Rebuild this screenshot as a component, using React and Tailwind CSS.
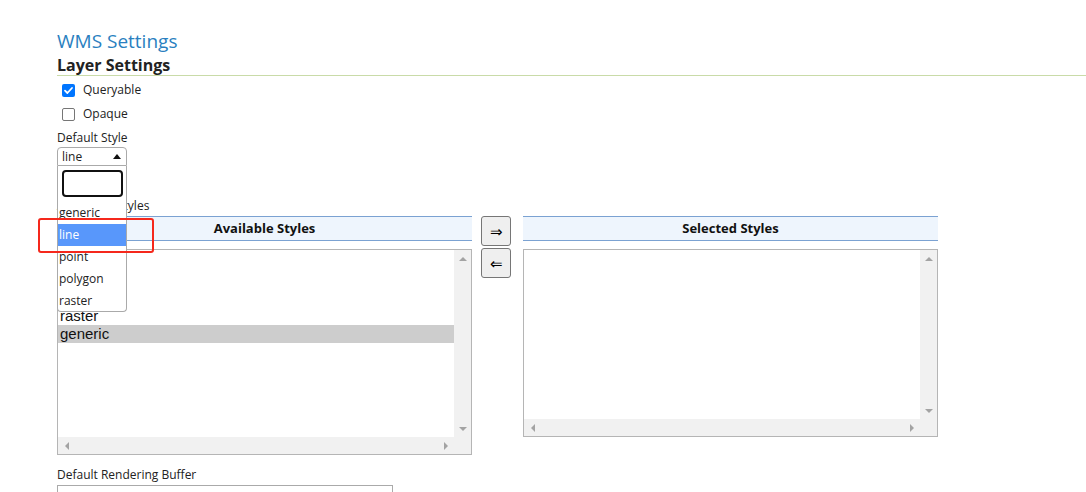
import React from "react";

function VScroll({ className = "" }) {
  return (
    <div className={"absolute right-0 top-0 w-[17px] bg-[#f1f1f1] flex flex-col items-center justify-between " + className}>
      <div className="h-[17px] flex items-center justify-center">
        <div className="w-0 h-0 border-x-[4px] border-x-transparent border-b-[4px] border-b-[#a3a3a3]" />
      </div>
      <div className="h-[17px] flex items-center justify-center">
        <div className="w-0 h-0 border-x-[4px] border-x-transparent border-t-[4px] border-t-[#a3a3a3]" />
      </div>
    </div>
  );
}

function HScroll() {
  return (
    <div className="absolute left-0 right-0 bottom-0 h-[17px] bg-[#f1f1f1] flex items-center justify-between">
      <div className="w-[17px] h-[17px] flex items-center justify-center">
        <div className="w-0 h-0 border-y-[4px] border-y-transparent border-r-[4px] border-r-[#a3a3a3]" />
      </div>
      <div className="w-[17px] h-[17px] mr-[17px] flex items-center justify-center">
        <div className="w-0 h-0 border-y-[4px] border-y-transparent border-l-[4px] border-l-[#a3a3a3]" />
      </div>
    </div>
  );
}

function Checkbox({ checked }) {
  if (checked) {
    return (
      <div className="w-[13px] h-[13px] rounded-[2px] bg-[#0075ff] flex items-center justify-center">
        <svg width="11" height="11" viewBox="0 0 11 11">
          <path d="M2 5.6 L4.4 8 L9 3" stroke="white" strokeWidth="1.8" fill="none" strokeLinecap="round" strokeLinejoin="round" />
        </svg>
      </div>
    );
  }
  return <div className="w-[13px] h-[13px] rounded-[2px] border border-[#767676] bg-white" />;
}

export default function App() {
  const items = ["line", "point", "polygon", "raster", "generic"];
  return (
    <div
      className="relative w-[1086px] h-[492px] overflow-hidden bg-white text-[#333]"
      style={{ fontFamily: '"Open Sans", "Noto Sans", sans-serif' }}
    >
      <div className="pl-[57px] pt-[28px]">
        <h1 className="text-[19px] leading-[26px] text-[#2a7fc0]">WMS Settings</h1>
        <h2 className="mt-px text-[16px] leading-[20px] font-bold text-[#222] border-b border-[#c9dba8]">
          Layer Settings
        </h2>
        <div className="mt-[2px]">
          <div className="h-[24px] flex items-center pl-[5px]">
            <Checkbox checked />
            <span className="ml-[8px] text-[12px] text-[#222]">Queryable</span>
          </div>
          <div className="h-[24px] flex items-center pl-[5px]">
            <Checkbox />
            <span className="ml-[8px] text-[12px] text-[#222]">Opaque</span>
          </div>
        </div>
        <div className="mt-[2px] text-[12px] leading-[19px] text-[#222]">Default Style</div>
        <div className="w-[70px] h-[19px] border border-[#aaa] rounded-t-[4px] flex items-center justify-between pl-[4px] pr-[5px]">
          <span className="text-[12px] leading-[17px] text-[#222]">line</span>
          <div className="w-0 h-0 border-x-[4px] border-x-transparent border-b-[5px] border-b-[#111]" />
        </div>
        <div className="mt-[31px] text-[12px] leading-[18px] text-[#222]">Additional Styles</div>
        <div className="mt-[1px] flex items-start">
          <div className="w-[415px]">
            <div className="h-[25px] bg-[#eef5fd] border-y border-[#7ba2d2] flex items-center justify-center text-[13px] font-bold text-[#111]">
              Available Styles
            </div>
            <div className="relative mt-[8px] h-[206px] border border-[#b5b5b5] bg-white">
              <div className="pt-[3px] pr-[17px]" style={{ fontFamily: '"Liberation Sans", Arial, sans-serif' }}>
                {items.map((it) => (
                  <div
                    key={it}
                    className={
                      "h-[18px] leading-[18px] pl-[2px] text-[15px] text-[#111] " +
                      (it === "generic" ? "bg-[#cdcdcd]" : "")
                    }
                  >
                    {it}
                  </div>
                ))}
              </div>
              <VScroll className="bottom-[17px]" />
              <HScroll />
            </div>
          </div>
          <div className="ml-[9px] w-[30px] flex flex-col gap-[2px]">
            <div className="h-[30px] bg-[#efefef] border border-[#767676] rounded-[3px] flex items-center justify-center text-[15px] text-black">
              ⇒
            </div>
            <div className="h-[30px] bg-[#efefef] border border-[#767676] rounded-[3px] flex items-center justify-center text-[15px] text-black">
              ⇐
            </div>
          </div>
          <div className="ml-[12px] w-[415px]">
            <div className="h-[25px] bg-[#eef5fd] border-y border-[#7ba2d2] flex items-center justify-center text-[13px] font-bold text-[#111]">
              Selected Styles
            </div>
            <div className="relative mt-[8px] h-[188px] border border-[#b5b5b5] bg-white">
              <VScroll className="bottom-[17px]" />
              <HScroll />
            </div>
          </div>
        </div>
        <div className="mt-[11px] text-[12px] leading-[18px] text-[#222]">Default Rendering Buffer</div>
        <div className="mt-[1px] w-[336px] h-[24px] border border-[#aaa] bg-white" />
      </div>

      {/* open select2 dropdown */}
      <div className="absolute left-[57px] top-[166px] w-[70px] h-[146px] bg-white border-x border-b border-[#aaa] rounded-b-[4px]">
        <div className="pt-[4px] pb-[5px] pl-[4px] pr-[3px]">
          <div className="w-[61px] h-[27px] border-2 border-[#111] rounded-[4px] bg-white" />
        </div>
        <div className="text-[12px] text-[#222]">
          <div className="h-[22px] leading-[22px] pl-[1px]">generic</div>
          <div className="h-[22px] leading-[22px] pl-[1px] bg-[#5897fb] text-white">line</div>
          <div className="h-[22px] leading-[22px] pl-[1px]">point</div>
          <div className="h-[22px] leading-[22px] pl-[1px]">polygon</div>
          <div className="h-[22px] leading-[22px] pl-[1px]">raster</div>
        </div>
      </div>

      {/* annotation box */}
      <div className="absolute left-[38px] top-[218px] w-[116px] h-[35px] border-2 border-[#f5281c] rounded-[3px]" />
    </div>
  );
}
